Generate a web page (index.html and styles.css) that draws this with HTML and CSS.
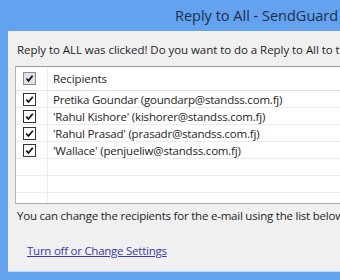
FILE: index.html
```html
<!DOCTYPE html>
<html>
<head>
<meta charset="utf-8">
<link rel="stylesheet" href="styles.css">
</head>
<body>
<div class="window">
  <div class="titlebar"><span class="title">Reply to All - SendGuard</span></div>
  <div class="frame">
    <div class="client">
      <p class="prompt">Reply to ALL was clicked! Do you want to do a Reply to All to these recipients?</p>
      <div class="list">
        <div class="row head">
          <div class="cell-check"><span class="cb cb-head"><svg viewBox="0 0 11 11" width="11" height="11"><path d="M2.5 5.5 L4.5 7.8 L8.6 2.8" fill="none" stroke="#111" stroke-width="1.8"/></svg></span></div>
          <div class="cell-text">Recipients</div>
        </div>
        <div class="row">
          <div class="cell-check"><span class="cb"><svg viewBox="0 0 11 11" width="11" height="11"><path d="M2.3 5.6 L4.5 8 L8.8 2.8" fill="none" stroke="#111" stroke-width="1.8"/></svg></span></div>
          <div class="cell-text">Pretika Goundar (goundarp@standss.com.fj)</div>
        </div>
        <div class="row">
          <div class="cell-check"><span class="cb"><svg viewBox="0 0 11 11" width="11" height="11"><path d="M2.3 5.6 L4.5 8 L8.8 2.8" fill="none" stroke="#111" stroke-width="1.8"/></svg></span></div>
          <div class="cell-text">'Rahul Kishore' (kishorer@standss.com.fj)</div>
        </div>
        <div class="row">
          <div class="cell-check"><span class="cb"><svg viewBox="0 0 11 11" width="11" height="11"><path d="M2.3 5.6 L4.5 8 L8.8 2.8" fill="none" stroke="#111" stroke-width="1.8"/></svg></span></div>
          <div class="cell-text">'Rahul Prasad' (prasadr@standss.com.fj)</div>
        </div>
        <div class="row">
          <div class="cell-check"><span class="cb"><svg viewBox="0 0 11 11" width="11" height="11"><path d="M2.3 5.6 L4.5 8 L8.8 2.8" fill="none" stroke="#111" stroke-width="1.8"/></svg></span></div>
          <div class="cell-text">'Wallace' (penjueliw@standss.com.fj)</div>
        </div>
        <div class="row"><div class="cell-check"></div><div class="cell-text"></div></div>
        <div class="row"><div class="cell-check"></div><div class="cell-text"></div></div>
        <div class="row last"><div class="cell-check"></div><div class="cell-text"></div></div>
      </div>
      <p class="note">You can change the recipients for the e-mail using the list below.</p>
      <a class="link" href="#">Turn off or Change Settings</a>
    </div>
  </div>
</div>
</body>
</html>
```
FILE: styles.css
```css
html, body {
  margin: 0;
  padding: 0;
}
body {
  width: 340px;
  height: 280px;
  overflow: hidden;
  font-family: "Open Sans", "Noto Sans", sans-serif;
  color: #1e1e1e;
}
.window {
  width: 340px;
  height: 280px;
  background: #62a2ef;
  display: flex;
  flex-direction: column;
}
.titlebar {
  height: 31px;
  flex: none;
  display: flex;
  align-items: center;
  padding-left: 175px;
  font-size: 14.5px;
  color: #1c2f4a;
  white-space: nowrap;
}
.frame {
  flex: 1;
  display: flex;
  padding-left: 8px;
  padding-bottom: 8px;
  min-height: 0;
}
.client {
  flex: 1;
  background: #f0f0f0;
  border-bottom: 1px solid #b9d6f6;
  overflow: hidden;
  font-size: 11.5px;
  white-space: nowrap;
  display: flex;
  flex-direction: column;
}
.prompt {
  margin: 12px 0 0 9px;
  line-height: 14px;
  letter-spacing: -0.05px;
}
.list {
  margin: 9px 0 0 7px;
  width: 400px;
  height: 136px;
  background: #fff;
  border-top: 1px solid #9a9a9a;
  border-left: 1px solid #b4b4b4;
  border-bottom: 1px solid #a8a8a8;
  display: flex;
  flex-direction: column;
  overflow: hidden;
}
.row {
  display: flex;
  height: 17px;
  flex: none;
  border-bottom: 1px solid #ececec;
  box-sizing: border-box;
  letter-spacing: -0.2px;
}
.row.head {
  height: 24px;
  border-bottom: 1px solid #e2e2e2;
  letter-spacing: -0.1px;
}
.row.last {
  border-bottom: none;
}
.cell-check {
  width: 32px;
  flex: none;
  border-right: 1px solid #ececec;
  display: flex;
  align-items: center;
  padding-left: 7px;
  box-sizing: border-box;
}
.cell-text {
  padding-left: 5px;
  display: flex;
  align-items: center;
}
.cb {
  width: 11px;
  height: 11px;
  border: 1px solid #333;
  background: #fff;
  display: flex;
}
.cb-head {
  border-color: #8c8c8c;
  background: #dfe3e8;
}
.note {
  margin: 5px 0 0 9px;
  line-height: 14px;
  letter-spacing: -0.22px;
}
.link {
  margin: 21px 0 0 19px;
  line-height: 14px;
  color: #3a3aa8;
  text-decoration: underline;
  align-self: flex-start;
  letter-spacing: -0.25px;
}
```
